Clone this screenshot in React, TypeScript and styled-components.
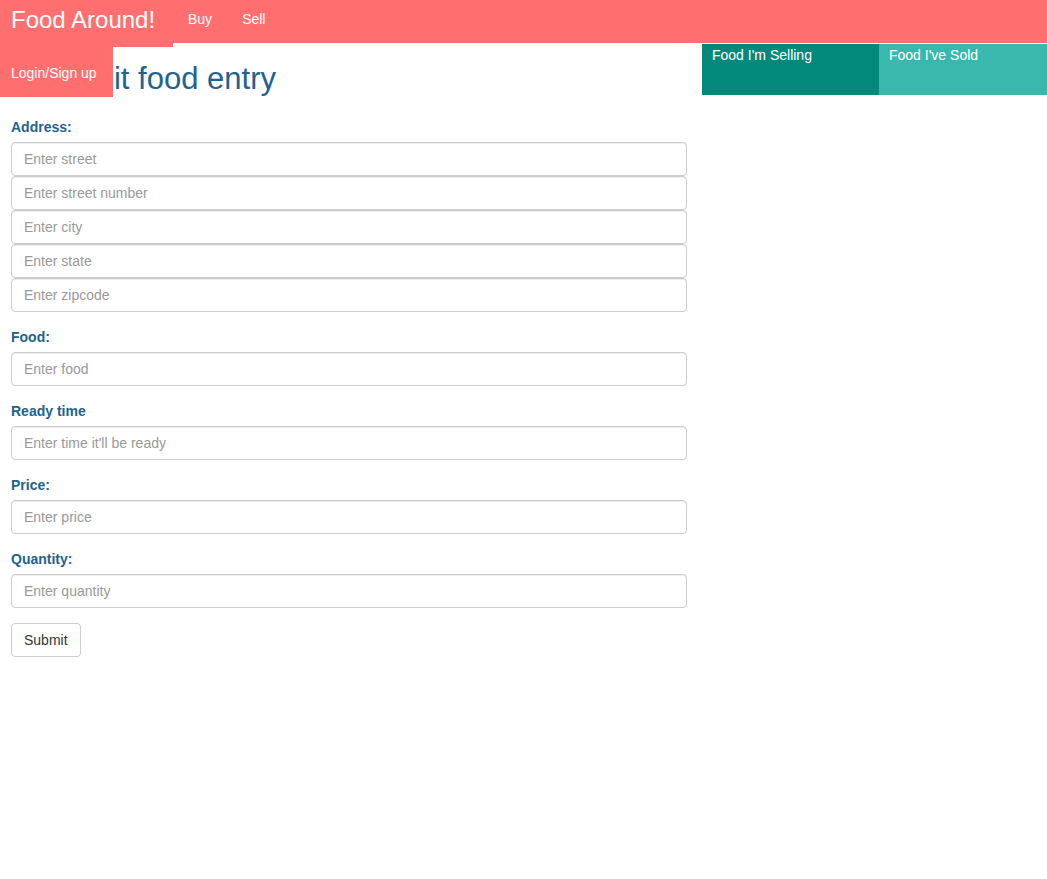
import React from "react";
import styled, { createGlobalStyle } from "styled-components";

const GlobalStyle = createGlobalStyle`
  html, body {
    margin: 0;
    padding: 0;
    background: #ffffff;
  }
  body {
    font-family: "Liberation Sans", Arial, Helvetica, sans-serif;
    font-size: 14px;
    color: #333333;
  }
  * { box-sizing: border-box; }
`;

const RED = "#ff6f70";
const BLUE = "#22628f";

const Navbar = styled.header`
  position: relative;
  display: flex;
  align-items: flex-start;
  height: 43px;
  background: ${RED};
  color: #ffffff;
  z-index: 2;
`;

const Brand = styled.a`
  display: block;
  width: 173px;
  height: 47px;
  padding-left: 11px;
  background: ${RED};
  font-size: 24px;
  line-height: 40px;
  color: #ffffff;
  text-decoration: none;
  white-space: nowrap;
`;

const NavLink = styled.a`
  display: block;
  padding: 0 15px;
  font-size: 14px;
  line-height: 38px;
  color: #ffffff;
  text-decoration: none;
`;

const LoginLink = styled.a`
  position: absolute;
  top: 47px;
  left: 0;
  width: 113px;
  height: 50px;
  padding-left: 11px;
  background: ${RED};
  font-size: 14px;
  line-height: 52px;
  color: #ffffff;
  text-decoration: none;
  white-space: nowrap;
`;

const Layout = styled.div`
  display: flex;
  align-items: flex-start;
`;

const MainColumn = styled.main`
  flex: 0 0 702px;
  padding: 0 15px 0 11px;
`;

const Sidebar = styled.aside`
  flex: 1;
  display: flex;
  margin-top: 1px;
`;

const Tab = styled.a<{ $bg: string; $width?: number }>`
  display: block;
  flex: ${(p) => (p.$width ? `0 0 ${p.$width}px` : "1")};
  height: 51px;
  padding: 1px 10px 0 10px;
  background: ${(p) => p.$bg};
  color: #ffffff;
  font-size: 14px;
  line-height: 20px;
  text-decoration: none;
  white-space: nowrap;
`;

const Title = styled.h2`
  margin: 19px 0 21px 22px;
  font-size: 31px;
  line-height: 34px;
  font-weight: 500;
  color: ${BLUE};
  white-space: nowrap;
`;

const Form = styled.form`
  display: flex;
  flex-direction: column;
`;

const FormGroup = styled.div`
  display: flex;
  flex-direction: column;
  margin-bottom: 15px;
`;

const Label = styled.label`
  display: block;
  margin-bottom: 5px;
  font-size: 14px;
  line-height: 20px;
  font-weight: bold;
  color: ${BLUE};
`;

const Input = styled.input`
  display: block;
  width: 100%;
  height: 34px;
  padding: 6px 12px;
  border: 1px solid #cccccc;
  border-radius: 4px;
  background: #ffffff;
  box-shadow: inset 0 1px 1px rgba(0, 0, 0, 0.075);
  font-family: "Liberation Sans", Arial, Helvetica, sans-serif;
  font-size: 14px;
  line-height: 20px;
  color: #555555;
  outline: none;
  &::placeholder {
    color: #999999;
  }
`;

const SubmitButton = styled.button`
  align-self: flex-start;
  height: 34px;
  padding: 6px 12px;
  border: 1px solid #cccccc;
  border-radius: 4px;
  background: #ffffff;
  font-family: "Liberation Sans", Arial, Helvetica, sans-serif;
  font-size: 14px;
  line-height: 20px;
  color: #333333;
  cursor: pointer;
`;

const addressFields = [
  "Enter street",
  "Enter street number",
  "Enter city",
  "Enter state",
  "Enter zipcode",
];

const singleFields = [
  { label: "Food:", placeholder: "Enter food" },
  { label: "Ready time", placeholder: "Enter time it'll be ready" },
  { label: "Price:", placeholder: "Enter price" },
  { label: "Quantity:", placeholder: "Enter quantity" },
];

export default function App() {
  return (
    <>
      <GlobalStyle />
      <Navbar>
        <Brand href="#">Food Around!</Brand>
        <NavLink href="#">Buy</NavLink>
        <NavLink href="#">Sell</NavLink>
        <LoginLink href="#">Login/Sign up</LoginLink>
      </Navbar>
      <Layout>
        <MainColumn>
          <Title>Submit food entry</Title>
          <Form onSubmit={(e) => e.preventDefault()}>
            <FormGroup>
              <Label>Address:</Label>
              {addressFields.map((p) => (
                <Input key={p} type="text" placeholder={p} />
              ))}
            </FormGroup>
            {singleFields.map((f) => (
              <FormGroup key={f.label}>
                <Label>{f.label}</Label>
                <Input type="text" placeholder={f.placeholder} />
              </FormGroup>
            ))}
            <SubmitButton type="submit">Submit</SubmitButton>
          </Form>
        </MainColumn>
        <Sidebar>
          <Tab href="#" $bg="#02897b" $width={177}>
            Food I'm Selling
          </Tab>
          <Tab href="#" $bg="#3bb8ae">
            Food I've Sold
          </Tab>
        </Sidebar>
      </Layout>
    </>
  );
}
